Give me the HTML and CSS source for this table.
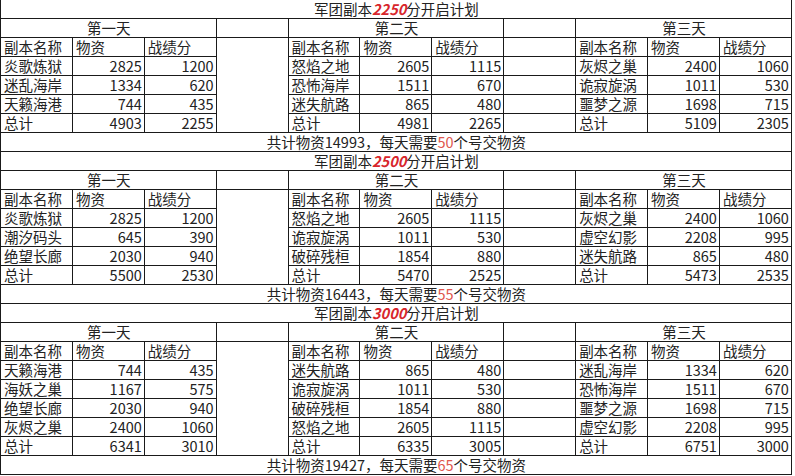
FILE: index.html
```html
<!DOCTYPE html>
<html lang="zh">
<head>
<meta charset="utf-8">
<title>军团副本开启计划</title>
<link rel="stylesheet" href="styles.css">
</head>
<body>
<table class="sheet">
<colgroup>
<col class="c"><col class="c"><col class="c"><col class="c"><col class="c"><col class="c"><col class="c"><col class="c"><col class="c"><col class="c"><col class="c">
</colgroup>
<tbody>
<tr class="first"><td colspan="11" class="title">军团副本<span class="hi">2250</span>分开启计划</td></tr>
<tr><td colspan="3" class="day">第一天</td><td class="gapday"></td><td colspan="3" class="day">第二天</td><td></td><td colspan="3" class="day">第三天</td></tr>
<tr><td>副本名称</td><td>物资</td><td>战绩分</td><td class="gap"></td><td>副本名称</td><td>物资</td><td>战绩分</td><td></td><td>副本名称</td><td>物资</td><td>战绩分</td></tr>
<tr><td>炎歌炼狱</td><td class="n">2825</td><td class="n">1200</td><td class="gap"></td><td>怒焰之地</td><td class="n">2605</td><td class="n">1115</td><td></td><td>灰烬之巢</td><td class="n">2400</td><td class="n">1060</td></tr>
<tr><td>迷乱海岸</td><td class="n">1334</td><td class="n">620</td><td class="gap"></td><td>恐怖海岸</td><td class="n">1511</td><td class="n">670</td><td></td><td>诡寂旋涡</td><td class="n">1011</td><td class="n">530</td></tr>
<tr><td>天籁海港</td><td class="n">744</td><td class="n">435</td><td class="gap"></td><td>迷失航路</td><td class="n">865</td><td class="n">480</td><td></td><td>噩梦之源</td><td class="n">1698</td><td class="n">715</td></tr>
<tr><td>总计</td><td class="n">4903</td><td class="n">2255</td><td class="gap"></td><td>总计</td><td class="n">4981</td><td class="n">2265</td><td></td><td>总计</td><td class="n">5109</td><td class="n">2305</td></tr>
<tr><td colspan="11" class="sum">共计物资14993，每天需要<span class="red">50</span>个号交物资</td></tr>

<tr><td colspan="11" class="title">军团副本<span class="hi">2500</span>分开启计划</td></tr>
<tr><td colspan="3" class="day">第一天</td><td class="gapday"></td><td colspan="3" class="day">第二天</td><td></td><td colspan="3" class="day">第三天</td></tr>
<tr><td>副本名称</td><td>物资</td><td>战绩分</td><td class="gap"></td><td>副本名称</td><td>物资</td><td>战绩分</td><td></td><td>副本名称</td><td>物资</td><td>战绩分</td></tr>
<tr><td>炎歌炼狱</td><td class="n">2825</td><td class="n">1200</td><td class="gap"></td><td>怒焰之地</td><td class="n">2605</td><td class="n">1115</td><td></td><td>灰烬之巢</td><td class="n">2400</td><td class="n">1060</td></tr>
<tr><td>潮汐码头</td><td class="n">645</td><td class="n">390</td><td class="gap"></td><td>诡寂旋涡</td><td class="n">1011</td><td class="n">530</td><td></td><td>虚空幻影</td><td class="n">2208</td><td class="n">995</td></tr>
<tr><td>绝望长廊</td><td class="n">2030</td><td class="n">940</td><td class="gap"></td><td>破碎残桓</td><td class="n">1854</td><td class="n">880</td><td></td><td>迷失航路</td><td class="n">865</td><td class="n">480</td></tr>
<tr><td>总计</td><td class="n">5500</td><td class="n">2530</td><td class="gap"></td><td>总计</td><td class="n">5470</td><td class="n">2525</td><td></td><td>总计</td><td class="n">5473</td><td class="n">2535</td></tr>
<tr><td colspan="11" class="sum">共计物资16443，每天需要<span class="red">55</span>个号交物资</td></tr>

<tr><td colspan="11" class="title">军团副本<span class="hi">3000</span>分开启计划</td></tr>
<tr><td colspan="3" class="day">第一天</td><td class="gapday"></td><td colspan="3" class="day">第二天</td><td></td><td colspan="3" class="day">第三天</td></tr>
<tr><td>副本名称</td><td>物资</td><td>战绩分</td><td class="gap"></td><td>副本名称</td><td>物资</td><td>战绩分</td><td></td><td>副本名称</td><td>物资</td><td>战绩分</td></tr>
<tr><td>天籁海港</td><td class="n">744</td><td class="n">435</td><td class="gap"></td><td>迷失航路</td><td class="n">865</td><td class="n">480</td><td></td><td>迷乱海岸</td><td class="n">1334</td><td class="n">620</td></tr>
<tr><td>海妖之巢</td><td class="n">1167</td><td class="n">575</td><td class="gap"></td><td>诡寂旋涡</td><td class="n">1011</td><td class="n">530</td><td></td><td>恐怖海岸</td><td class="n">1511</td><td class="n">670</td></tr>
<tr><td>绝望长廊</td><td class="n">2030</td><td class="n">940</td><td class="gap"></td><td>破碎残桓</td><td class="n">1854</td><td class="n">880</td><td></td><td>噩梦之源</td><td class="n">1698</td><td class="n">715</td></tr>
<tr><td>灰烬之巢</td><td class="n">2400</td><td class="n">1060</td><td class="gap"></td><td>怒焰之地</td><td class="n">2605</td><td class="n">1115</td><td></td><td>虚空幻影</td><td class="n">2208</td><td class="n">995</td></tr>
<tr><td>总计</td><td class="n">6341</td><td class="n">3010</td><td class="gap"></td><td>总计</td><td class="n">6335</td><td class="n">3005</td><td></td><td>总计</td><td class="n">6751</td><td class="n">3000</td></tr>
<tr><td colspan="11" class="sum">共计物资19427，每天需要<span class="red">65</span>个号交物资</td></tr>
</tbody>
</table>
</body>
</html>
```
FILE: styles.css
```css
html, body {
  margin: 0;
  padding: 0;
  background: #ffffff;
}
body {
  font-family: "Noto Sans CJK SC", "Noto Sans", sans-serif;
  font-weight: 400;
  color: #222222;
}
.sheet {
  border-collapse: collapse;
  table-layout: fixed;
  width: 791px;
}
.sheet .c {
  width: 71.9px;
}
.sheet tr {
  height: 19px;
}
.sheet tr.first {
  height: 18px;
}
.sheet td {
  border: 1px solid #1a1a1a;
  padding: 0 2px 0 3px;
  height: 18px;
  font-size: 14.5px;
  line-height: 18px;
  white-space: nowrap;
  vertical-align: middle;
  text-align: left;
}
.sheet tr.first td {
  border-top: none;
  height: 17px;
  line-height: 17px;
}
.sheet td.n {
  text-align: right;
}
.sheet td.title,
.sheet td.day,
.sheet td.sum {
  text-align: center;
}
.sheet td.gap {
  border-top: none;
  border-bottom: none;
}
.hi {
  color: #d8262c;
  font-weight: 700;
  font-style: italic;
}
.red {
  color: #e0574f;
}
```
